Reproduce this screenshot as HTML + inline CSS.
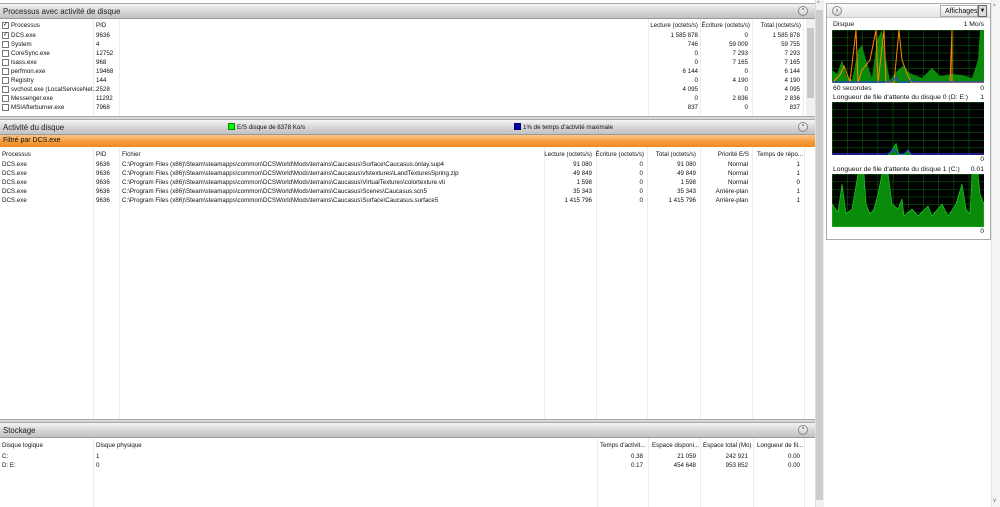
<!DOCTYPE html>
<html><head><meta charset="utf-8"><style>
*{margin:0;padding:0;box-sizing:border-box}
body{width:1000px;height:507px;background:#fff;position:relative;overflow:hidden;font-family:"Liberation Sans",sans-serif;font-size:6.2px;color:#111}
div,span{position:absolute;white-space:nowrap}
span{margin-top:1px}
.hd{left:0;width:815px;height:16px;background:linear-gradient(#f4f4f4,#d2d2d2 60%,#c2c2c2);border-top:1px solid #a8a8a8;border-bottom:1px solid #999;font-size:7.8px;color:#222;padding:3px 0 0 3px}
.btn{width:10px;height:10px;border-radius:50%;background:linear-gradient(#fff,#ccc);border:1px solid #888;top:2px;left:798px;font-size:6px;text-align:center;line-height:8px}
.r{text-align:right}
.vl{width:1px;background:#ececec}
.cb{width:7px;height:7px;border:1px solid #777;background:#fff;left:2px;margin-top:0}
.gl{font-size:6.8px}
</style></head><body>
<!-- section 1 -->
<div class="hd" style="top:3px">Processus avec activité de disque<div class="btn">^</div></div>
<div class="vl" style="left:93px;top:19px;height:99px"></div>
<div class="vl" style="left:119px;top:19px;height:99px"></div>
<div class="vl" style="left:648px;top:19px;height:99px"></div>
<div class="vl" style="left:700px;top:19px;height:99px"></div>
<div class="vl" style="left:752px;top:19px;height:99px"></div>
<div class="vl" style="left:803px;top:19px;height:99px"></div>
<div style="left:806px;top:19px;width:9px;height:99px;background:#f0f0f0"></div>
<div style="left:807px;top:28px;width:7px;height:70px;background:#c8c8c8"></div>
<span class="cb" style="top:22px;font-size:6px;line-height:5px">✓</span><span style="left:11px;top:21px">Processus</span><span style="left:96px;top:21px">PID</span>
<span class="r" style="right:302px;top:21px">Lecture (octets/s)</span><span class="r" style="right:250px;top:21px">Écriture (octets/s)</span><span class="r" style="right:199px;top:21px">Total (octets/s)</span>
<span class="cb" style="top:32px;font-size:6px;line-height:5px">✓</span><span style="left:11px;top:31px">DCS.exe</span><span style="left:96px;top:31px">9636</span><span class="r" style="right:302px;top:31px">1 585 878</span><span class="r" style="right:252px;top:31px">0</span><span class="r" style="right:200px;top:31px">1 585 878</span>
<span class="cb" style="top:41px"></span><span style="left:11px;top:40px">System</span><span style="left:96px;top:40px">4</span><span class="r" style="right:302px;top:40px">746</span><span class="r" style="right:252px;top:40px">59 009</span><span class="r" style="right:200px;top:40px">59 755</span>
<span class="cb" style="top:50px"></span><span style="left:11px;top:49px">CoreSync.exe</span><span style="left:96px;top:49px">12752</span><span class="r" style="right:302px;top:49px">0</span><span class="r" style="right:252px;top:49px">7 293</span><span class="r" style="right:200px;top:49px">7 293</span>
<span class="cb" style="top:59px"></span><span style="left:11px;top:58px">lsass.exe</span><span style="left:96px;top:58px">968</span><span class="r" style="right:302px;top:58px">0</span><span class="r" style="right:252px;top:58px">7 165</span><span class="r" style="right:200px;top:58px">7 165</span>
<span class="cb" style="top:68px"></span><span style="left:11px;top:67px">perfmon.exe</span><span style="left:96px;top:67px">19468</span><span class="r" style="right:302px;top:67px">6 144</span><span class="r" style="right:252px;top:67px">0</span><span class="r" style="right:200px;top:67px">6 144</span>
<span class="cb" style="top:77px"></span><span style="left:11px;top:76px">Registry</span><span style="left:96px;top:76px">144</span><span class="r" style="right:302px;top:76px">0</span><span class="r" style="right:252px;top:76px">4 190</span><span class="r" style="right:200px;top:76px">4 190</span>
<span class="cb" style="top:86px"></span><span style="left:11px;top:85px">svchost.exe (LocalServiceNet...</span><span style="left:96px;top:85px">2528</span><span class="r" style="right:302px;top:85px">4 095</span><span class="r" style="right:252px;top:85px">0</span><span class="r" style="right:200px;top:85px">4 095</span>
<span class="cb" style="top:95px"></span><span style="left:11px;top:94px">Messenger.exe</span><span style="left:96px;top:94px">11292</span><span class="r" style="right:302px;top:94px">0</span><span class="r" style="right:252px;top:94px">2 836</span><span class="r" style="right:200px;top:94px">2 836</span>
<span class="cb" style="top:104px"></span><span style="left:11px;top:103px">MSIAfterburner.exe</span><span style="left:96px;top:103px">7968</span><span class="r" style="right:302px;top:103px">837</span><span class="r" style="right:252px;top:103px">0</span><span class="r" style="right:200px;top:103px">837</span>
<div style="left:0;top:116px;width:815px;height:4px;background:#d8d8d8;border-top:1px solid #aaa"></div>
<!-- section 2 -->
<div class="hd" style="top:119px">Activité du disque<div class="btn">^</div></div>
<div style="left:228px;top:123px;width:7px;height:7px;background:#0f0;border:1px solid #080"></div><span style="left:237px;top:123px">E/S disque de 8378 Ko/s</span>
<div style="left:514px;top:123px;width:7px;height:7px;background:#00a;border:1px solid #006"></div><span style="left:523px;top:123px">1% de temps d'activité maximale</span>
<div style="left:0;top:135px;width:815px;height:12px;background:linear-gradient(#fbc68a,#f7a040 50%,#f08a20);font-size:7px;padding:2px 0 0 3px;color:#111">Filtré par DCS.exe</div>
<div class="vl" style="left:93px;top:147px;height:272px"></div>
<div class="vl" style="left:119px;top:147px;height:272px"></div>
<div class="vl" style="left:544px;top:147px;height:272px"></div>
<div class="vl" style="left:596px;top:147px;height:272px"></div>
<div class="vl" style="left:647px;top:147px;height:272px"></div>
<div class="vl" style="left:700px;top:147px;height:272px"></div>
<div class="vl" style="left:752px;top:147px;height:272px"></div>
<div class="vl" style="left:804px;top:147px;height:272px"></div>
<span style="left:2px;top:150px">Processus</span><span style="left:96px;top:150px">PID</span><span style="left:122px;top:150px">Fichier</span>
<span class="r" style="right:408px;top:150px">Lecture (octets/s)</span><span class="r" style="right:356px;top:150px">Écriture (octets/s)</span><span class="r" style="right:304px;top:150px">Total (octets/s)</span><span class="r" style="right:251px;top:150px">Priorité E/S</span><span style="left:757px;top:150px">Temps de répo...</span>
<span style="left:2px;top:160px">DCS.exe</span><span style="left:96px;top:160px">9636</span><span style="left:122px;top:160px">C:\Program Files (x86)\Steam\steamapps\common\DCSWorld\Mods\terrains\Caucasus\Surface\Caucasus.onlay.sup4</span><span class="r" style="right:408px;top:160px">91 080</span><span class="r" style="right:357px;top:160px">0</span><span class="r" style="right:304px;top:160px">91 080</span><span class="r" style="right:252px;top:160px">Normal</span><span class="r" style="right:200px;top:160px">1</span>
<span style="left:2px;top:169px">DCS.exe</span><span style="left:96px;top:169px">9636</span><span style="left:122px;top:169px">C:\Program Files (x86)\Steam\steamapps\common\DCSWorld\Mods\terrains\Caucasus\vfstextures\LandTexturesSpring.zip</span><span class="r" style="right:408px;top:169px">49 849</span><span class="r" style="right:357px;top:169px">0</span><span class="r" style="right:304px;top:169px">49 849</span><span class="r" style="right:252px;top:169px">Normal</span><span class="r" style="right:200px;top:169px">1</span>
<span style="left:2px;top:178px">DCS.exe</span><span style="left:96px;top:178px">9636</span><span style="left:122px;top:178px">C:\Program Files (x86)\Steam\steamapps\common\DCSWorld\Mods\terrains\Caucasus\VirtualTextures\colortexture.vti</span><span class="r" style="right:408px;top:178px">1 598</span><span class="r" style="right:357px;top:178px">0</span><span class="r" style="right:304px;top:178px">1 598</span><span class="r" style="right:252px;top:178px">Normal</span><span class="r" style="right:200px;top:178px">0</span>
<span style="left:2px;top:187px">DCS.exe</span><span style="left:96px;top:187px">9636</span><span style="left:122px;top:187px">C:\Program Files (x86)\Steam\steamapps\common\DCSWorld\Mods\terrains\Caucasus\Scenes\Caucasus.scn5</span><span class="r" style="right:408px;top:187px">35 343</span><span class="r" style="right:357px;top:187px">0</span><span class="r" style="right:304px;top:187px">35 343</span><span class="r" style="right:252px;top:187px">Arrière-plan</span><span class="r" style="right:200px;top:187px">1</span>
<span style="left:2px;top:196px">DCS.exe</span><span style="left:96px;top:196px">9636</span><span style="left:122px;top:196px">C:\Program Files (x86)\Steam\steamapps\common\DCSWorld\Mods\terrains\Caucasus\Surface\Caucasus.surface5</span><span class="r" style="right:408px;top:196px">1 415 796</span><span class="r" style="right:357px;top:196px">0</span><span class="r" style="right:304px;top:196px">1 415 796</span><span class="r" style="right:252px;top:196px">Arrière-plan</span><span class="r" style="right:200px;top:196px">1</span>
<div style="left:0;top:419px;width:815px;height:4px;background:#d8d8d8;border-top:1px solid #aaa"></div>
<!-- section 3 -->
<div class="hd" style="top:422px">Stockage<div class="btn">^</div></div>
<div class="vl" style="left:93px;top:438px;height:69px"></div>
<div class="vl" style="left:597px;top:438px;height:69px"></div>
<div class="vl" style="left:648px;top:438px;height:69px"></div>
<div class="vl" style="left:700px;top:438px;height:69px"></div>
<div class="vl" style="left:753px;top:438px;height:69px"></div>
<div class="vl" style="left:804px;top:438px;height:69px"></div>
<span style="left:2px;top:441px">Disque logique</span><span style="left:96px;top:441px">Disque physique</span><span style="left:600px;top:441px">Temps d'activit...</span><span style="left:652px;top:441px">Espace disponi...</span><span style="left:703px;top:441px">Espace total (Mo)</span><span style="left:757px;top:441px">Longueur de fil...</span>
<span style="left:2px;top:452px">C:</span><span style="left:96px;top:452px">1</span><span class="r" style="right:357px;top:452px">0.38</span><span class="r" style="right:304px;top:452px">21 059</span><span class="r" style="right:252px;top:452px">242 921</span><span class="r" style="right:200px;top:452px">0.00</span>
<span style="left:2px;top:461px">D: E:</span><span style="left:96px;top:461px">0</span><span class="r" style="right:357px;top:461px">0.17</span><span class="r" style="right:304px;top:461px">454 648</span><span class="r" style="right:252px;top:461px">953 852</span><span class="r" style="right:200px;top:461px">0.00</span>
<!-- main scrollbar -->
<div style="left:815px;top:0;width:9px;height:507px;background:#f0f0f0;border-left:1px solid #ddd"></div>
<div style="left:816px;top:10px;width:7px;height:490px;background:#cdcdcd"></div>
<span style="left:817px;top:0;font-size:6px;color:#666">^</span>
<!-- right panel -->
<div style="left:824px;top:0;width:176px;height:507px;background:#fff"></div>
<div style="left:826px;top:3px;width:165px;height:237px;background:#fff;border:1px solid #aaa"></div>
<div style="left:827px;top:4px;width:163px;height:14px;background:linear-gradient(#fafafa,#e4e4e4);border-bottom:1px solid #ccc"></div>
<div style="left:832px;top:6px;width:10px;height:10px;border-radius:50%;border:1px solid #888;background:linear-gradient(#fff,#ccc);font-size:7px;line-height:8px;text-align:center">›</div>
<div style="left:940px;top:5px;width:38px;height:12px;border:1px solid #aaa;background:linear-gradient(#fff,#ddd);font-size:7px;padding:2px 0 0 4px">Affichages</div>
<div style="left:978px;top:5px;width:9px;height:12px;border:1px solid #666;background:#ddd;font-size:6px;text-align:center;line-height:10px">▼</div>
<div style="left:991px;top:0;width:9px;height:507px;background:#f4f4f4;border-left:1px solid #e4e4e4"></div>
<span style="left:993px;top:3px;font-size:6px;color:#666">^</span>
<span style="left:993px;top:497px;font-size:6px;color:#666">v</span>
<span class="gl" style="left:833px;top:20px">Disque</span><span class="gl r" style="right:16px;top:20px">1 Mo/s</span>
<span class="gl" style="left:833px;top:84px">60 secondes</span><span class="gl r" style="right:16px;top:84px">0</span>
<span class="gl" style="left:833px;top:93px">Longueur de file d'attente du disque 0 (D: E:)</span><span class="gl r" style="right:16px;top:93px">1</span>
<span class="gl r" style="right:16px;top:155px">0</span>
<span class="gl" style="left:833px;top:165px">Longueur de file d'attente du disque 1 (C:)</span><span class="gl r" style="right:16px;top:165px">0.01</span>
<span class="gl r" style="right:16px;top:227px">0</span>
<svg style="position:absolute;left:832px;top:30px" width="152" height="53">
<defs><pattern id="g" width="15.2" height="7.6" patternUnits="userSpaceOnUse"><rect width="15.2" height="7.6" fill="#000"/><path d="M0 0V7.6M0 0H15.2" stroke="#0a6e0a" stroke-width="1"/></pattern></defs>
<rect width="152" height="53" fill="url(#g)"/>
<polygon fill="#0a8a0a" points="0,53 0,40 5,44 10,30 14,45 20,50 26,20 30,15 34,30 40,48 45,10 50,0 53,25 58,50 66,40 72,35 76,42 80,44 90,48 100,38 108,46 120,44 130,45 140,48 146,30 148,0 152,0 152,53"/>
<polyline fill="none" stroke="#f80" stroke-width="1" points="0,53 8,45 12,36 18,52 24,0 26,53 30,40 38,30 42,10 44,0 46,53 52,0 54,53 62,53 67,0 70,30 76,46 80,53 118,53 120,0 120,53 152,53"/>
<polyline fill="none" stroke="#33f" stroke-width="1" points="0,52 60,52 64,47 67,52 78,52 80,49 82,52 152,52"/>
</svg>
<svg style="position:absolute;left:832px;top:102px" width="152" height="53">
<rect width="152" height="53" fill="url(#g)"/>
<polyline fill="#0a8a0a" stroke="#0c0" points="56,53 60,48 64,42 67,53 72,53 76,48 79,53"/>
<polyline fill="none" stroke="#33f" points="0,52 56,52 62,47 66,52 72,52 76,48 79,52 152,52"/>
</svg>
<svg style="position:absolute;left:832px;top:174px" width="152" height="53">
<rect width="152" height="53" fill="url(#g)"/>
<polygon fill="#0a8a0a" stroke="#2d2" stroke-width=".6" points="0,53 0,30 6,38 10,10 14,40 20,35 26,0 32,0 34,30 38,40 42,35 46,20 50,0 56,0 60,30 66,35 70,25 72,42 80,35 86,42 90,38 96,32 100,42 110,30 116,42 124,30 130,10 134,35 138,40 140,0 146,0 148,20 152,30 152,53"/>
</svg>
</body></html>
